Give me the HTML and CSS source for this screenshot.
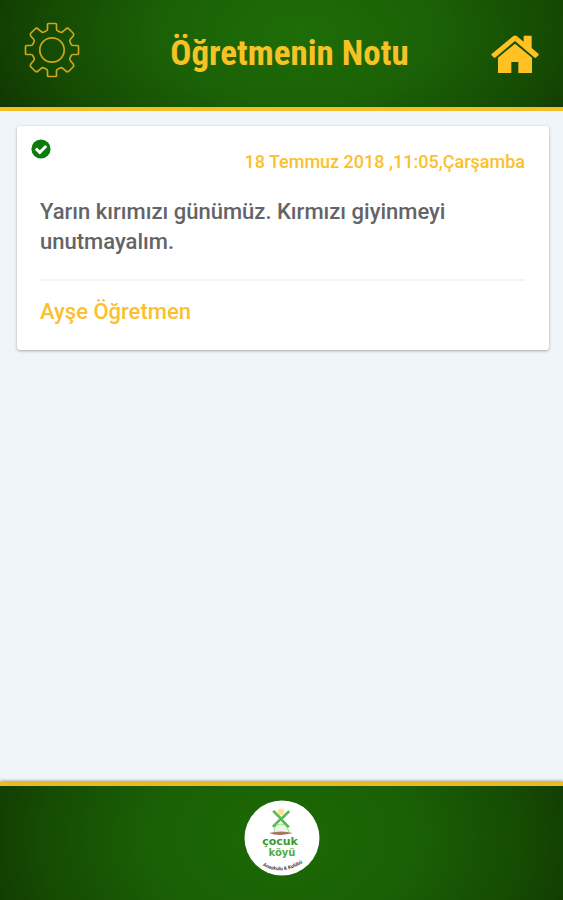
FILE: index.html
```
<!DOCTYPE html>
<html lang="tr">
<head>
<meta charset="utf-8">
<meta name="viewport" content="width=device-width, initial-scale=1">
<title>Öğretmenin Notu</title>
<link rel="stylesheet" href="styles.css">
</head>
<body>
<header class="topbar">
  <button class="icon-button" type="button" aria-label="Ayarlar">
    <svg class="gear" viewBox="-28 -28 56 56" aria-hidden="true">
      <path d="M-3.5-26.5H3.5Q4.5-26.5 4.5-25.5V-21Q4.5-19.5 6-19L8-18Q9.5-17.3 10.8-18.4L14-21.2Q15.6-22.4 17-21L21-17Q22.4-15.6 21.2-14L18.4-10.8Q17.3-9.5 18-8L19-6Q19.5-4.5 21-4.5H25.5Q26.5-4.5 26.5-3.5V3.5Q26.5 4.5 25.5 4.5H21Q19.5 4.5 19 6L18 8Q17.3 9.5 18.4 10.8L21.2 14Q22.4 15.6 21 17L17 21Q15.6 22.4 14 21.2L10.8 18.4Q9.5 17.3 8 18L6 19Q4.5 19.5 4.5 21V25.5Q4.5 26.5 3.5 26.5H-3.5Q-4.5 26.5-4.5 25.5V21Q-4.5 19.5-6 19L-8 18Q-9.5 17.3-10.8 18.4L-14 21.2Q-15.6 22.4-17 21L-21 17Q-22.4 15.6-21.2 14L-18.4 10.8Q-17.3 9.5-18 8L-19 6Q-19.5 4.5-21 4.5H-25.5Q-26.5 4.5-26.5 3.5V-3.5Q-26.5-4.5-25.5-4.5H-21Q-19.5-4.5-19-6L-18-8Q-17.3-9.5-18.4-10.8L-21.2-14Q-22.4-15.6-21-17L-17-21Q-15.6-22.4-14-21.2L-10.8-18.4Q-9.5-17.3-8-18L-6-19Q-4.5-19.5-4.5-21V-25.5Q-4.5-26.5-3.5-26.5Z"/>
      <circle r="12.2"/>
    </svg>
  </button>
  <h1 class="title">Öğretmenin Notu</h1>
  <a class="icon-button" href="#" aria-label="Ana sayfa">
    <svg class="home" viewBox="152 99 144 114" aria-hidden="true">
      <path d="M153 157L219 102Q224 99 229 102L250 119V101H274V138L295 156V159L287 167H283L224 117L164 167H161L153 159Z"/>
      <path d="M224 125L275 167V213H234V180H213V213H173V167Z"/>
    </svg>
  </a>
</header>
<main class="content">
  <article class="card">
    <svg class="check" viewBox="0 0 20 20" role="img" aria-label="Okundu">
      <circle cx="10" cy="10" r="9.6"/>
      <path d="M4.8 9.6L8.8 13.4L15.2 7"/>
    </svg>
    <time class="date" datetime="2018-07-18T11:05">18 Temmuz 2018 ,11:05,Çarşamba</time>
    <p class="message">Yarın kırımızı günümüz. Kırmızı giyinmeyi unutmayalım.</p>
    <p class="author">Ayşe Öğretmen</p>
  </article>
</main>
<footer class="bottombar">
  <svg class="logo" viewBox="0 0 76 76" role="img" aria-label="Çocuk Köyü">
    <defs><path id="arc" d="M16 64Q38 78 61 61"/></defs>
    <circle cx="38" cy="38" r="37.5" fill="#fff"/>
    <circle cx="37" cy="12" r="3.4" fill="#ffe09a"/>
    <path d="M30 32L31 27Q37 21 43 27L45 32" fill="#eff8e8" stroke="#a8d59c"/>
    <path d="M29 11L45 27M45 11L29 27" stroke="#49b849" stroke-width="2" fill="none"/>
    <path d="M30 10L37 17M46 12L39 19M28 26L35 19M44 28L37 21" stroke="#80cf72" fill="none"/>
    <path d="M25 33Q37 30 49 33Q39 35 35 35Q30 35 25 33Z" fill="#a4775f"/>
    <text class="logo-name" x="36" y="45">çocuk</text>
    <text class="logo-name logo-second" x="38" y="56">köyü</text>
    <text class="logo-small"><textPath href="#arc" startOffset="50%">Anaokulu &amp; Kulübü</textPath></text>
  </svg>
</footer>
</body>
</html>
```

FILE: styles.css
```
* {
  box-sizing: border-box;
}

body {
  margin: 0;
  min-height: 100vh;
  display: flex;
  flex-direction: column;
  background: #f0f5f9;
  font-family: Roboto, sans-serif;
  font-weight: 500;
}

.topbar {
  display: grid;
  grid-template-columns: 56px 1fr 48px;
  align-items: center;
  height: 111px;
  padding: 0 24px;
  border-bottom: 4px solid #f3bf25;
  background: radial-gradient(ellipse 60% 170% at 53% 30%, #1e6d08 0%, #1b6106 40%, #154a03 75%, #103502 100%);
}

.icon-button {
  display: flex;
  padding: 0;
  border: 0;
  background: none;
}

.gear {
  width: 56px;
  height: 56px;
  margin-bottom: 8px;
  fill: none;
  stroke: #d0a51d;
  stroke-width: 1.7;
}

.home {
  width: 48px;
  height: 38px;
  fill: #ffc222;
}

.title {
  margin: 0;
  padding-left: 8px;
  color: #f6c224;
  font-family: "Roboto Condensed", "Liberation Sans Narrow", sans-serif;
  font-size: 35px;
  font-weight: 700;
  line-height: 40px;
  text-align: center;
}

.content {
  flex: 1;
  padding: 15px 14px 15px 17px;
}

.card {
  position: relative;
  display: flex;
  flex-direction: column;
  padding: 24px 24px 23px 23px;
  border-radius: 3px;
  background: #fff;
  box-shadow: 0 1px 3px rgba(0, 0, 0, 0.32);
}

.check {
  position: absolute;
  top: 13px;
  left: 14px;
  width: 20px;
  height: 20px;
  fill: #087b0b;
}

.check path {
  fill: none;
  stroke: #fff;
  stroke-width: 3;
}

.date {
  align-self: flex-end;
  color: #fbc02d;
  font-size: 18px;
  line-height: 24px;
}

.message {
  margin: 0;
  padding: 23px 0 22px;
  border-bottom: 2px solid #f4f4f4;
  color: #646467;
  font-size: 22px;
  line-height: 30px;
}

.author {
  margin: 0;
  padding-top: 16px;
  color: #fbc02d;
  font-size: 22px;
  line-height: 30px;
}

.bottombar {
  display: flex;
  justify-content: center;
  height: 118px;
  padding-top: 14px;
  border-top: 4px solid #ecba20;
  background: radial-gradient(ellipse 58% 200% at 50% 45%, #1c6905 0%, #1a6005 40%, #154a03 75%, #103502 100%);
  box-shadow: 0 -1px 3px rgba(0, 0, 0, 0.4);
}

.logo {
  width: 76px;
  height: 76px;
}

.logo-name {
  fill: #3a9b35;
  font-family: "DejaVu Sans", sans-serif;
  font-size: 11px;
  font-weight: 700;
  text-anchor: middle;
}

.logo-second {
  fill: #50ad48;
  font-size: 10px;
}

.logo-small {
  fill: #444;
  font-size: 5px;
  font-weight: 700;
  text-anchor: middle;
}
```
